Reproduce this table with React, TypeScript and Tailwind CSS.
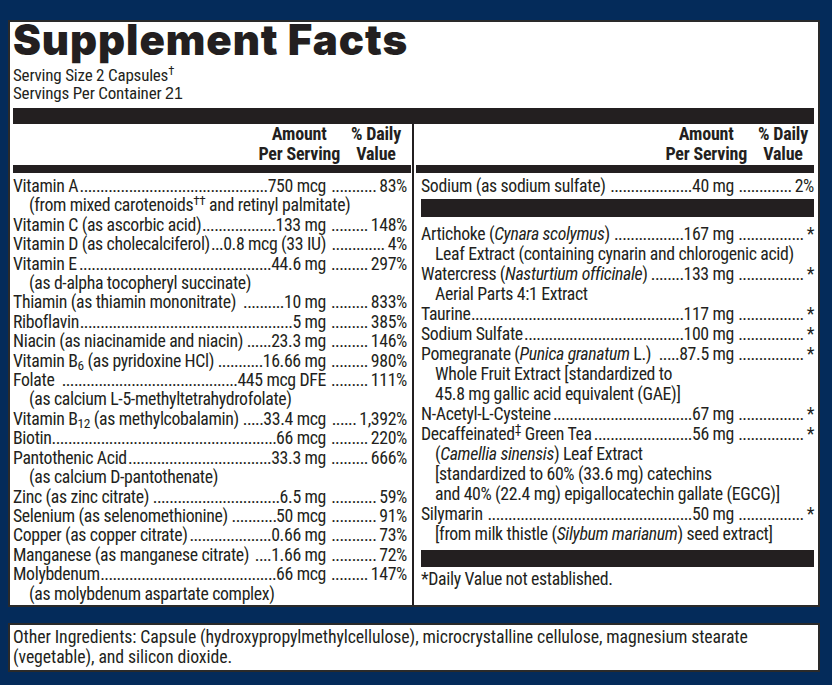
import React, { useLayoutEffect, useRef, useState } from "react"

type Row = {
  name: React.ReactNode
  amount: string
  dv: string
  sub?: React.ReactNode[]
}

const leftRows: Row[] = [
  {
    name: "Vitamin A",
    amount: "750 mcg",
    dv: "83%",
    sub: [
      <>
        (from mixed carotenoids<sup>††</sup> and retinyl palmitate)
      </>,
    ],
  },
  { name: "Vitamin C (as ascorbic acid)", amount: "133 mg", dv: "148%" },
  { name: "Vitamin D (as cholecalciferol)", amount: "0.8 mcg (33 IU)", dv: "4%" },
  { name: "Vitamin E", amount: "44.6 mg", dv: "297%", sub: ["(as d-alpha tocopheryl succinate)"] },
  { name: "Thiamin (as thiamin mononitrate) ", amount: "10 mg", dv: "833%" },
  { name: "Riboflavin", amount: "5 mg", dv: "385%" },
  { name: "Niacin (as niacinamide and niacin)", amount: "23.3 mg", dv: "146%" },
  {
    name: (
      <>
        Vitamin B<sub>6</sub> (as pyridoxine HCl)
      </>
    ),
    amount: "16.66 mg",
    dv: "980%",
  },
  { name: "Folate ", amount: "445 mcg DFE", dv: "111%", sub: ["(as calcium L-5-methyltetrahydrofolate)"] },
  {
    name: (
      <>
        Vitamin B<sub>12</sub> (as methylcobalamin)
      </>
    ),
    amount: "33.4 mcg",
    dv: "1,392%",
  },
  { name: "Biotin", amount: "66 mcg", dv: "220%" },
  { name: "Pantothenic Acid", amount: "33.3 mg", dv: "666%", sub: ["(as calcium D-pantothenate)"] },
  { name: "Zinc (as zinc citrate) ", amount: "6.5 mg", dv: "59%" },
  { name: "Selenium (as selenomethionine) ", amount: "50 mcg", dv: "91%" },
  { name: "Copper (as copper citrate)", amount: "0.66 mg", dv: "73%" },
  { name: "Manganese (as manganese citrate) ", amount: "1.66 mg", dv: "72%" },
  { name: "Molybdenum", amount: "66 mcg", dv: "147%", sub: ["(as molybdenum aspartate complex)"] },
]

const rightRows: Row[] = [
  {
    name: (
      <>
        Artichoke (<i>Cynara scolymus</i>){" "}
      </>
    ),
    amount: "167 mg",
    dv: "*",
    sub: ["Leaf Extract (containing cynarin and chlorogenic acid)"],
  },
  {
    name: (
      <>
        Watercress (<i>Nasturtium officinale</i>)
      </>
    ),
    amount: "133 mg",
    dv: "*",
    sub: ["Aerial Parts 4:1 Extract"],
  },
  { name: "Taurine", amount: "117 mg", dv: "*" },
  { name: "Sodium Sulfate", amount: "100 mg", dv: "*" },
  {
    name: (
      <>
        Pomegranate (<i>Punica granatum</i> L.){" "}
      </>
    ),
    amount: "87.5 mg",
    dv: "*",
    sub: ["Whole Fruit Extract [standardized to", "45.8 mg gallic acid equivalent (GAE)]"],
  },
  { name: "N-Acetyl-L-Cysteine", amount: "67 mg", dv: "*" },
  {
    name: (
      <>
        Decaffeinated<sup>‡</sup> Green Tea
      </>
    ),
    amount: "56 mg",
    dv: "*",
    sub: [
      <>
        (<i>Camellia sinensis</i>) Leaf Extract
      </>,
      "[standardized to 60% (33.6 mg) catechins",
      "and 40% (22.4 mg) epigallocatechin gallate (EGCG)]",
    ],
  },
  {
    name: "Silymarin ",
    amount: "50 mg",
    dv: "*",
    sub: [
      <>
        [from milk thistle (<i>Silybum marianum</i>) seed extract]
      </>,
    ],
  },
]

const PROBE = 100

// dot leader: fills exactly the free width so the dots never run under the amount
function Leader() {
  const ref = useRef<HTMLSpanElement>(null)
  const [count, setCount] = useState(PROBE)

  useLayoutEffect(() => {
    const el = ref.current
    if (!el) return
    const perDot = el.scrollWidth / PROBE
    if (perDot > 0) setCount(Math.max(0, Math.floor(el.clientWidth / perDot)))
  }, [])

  return (
    <span ref={ref} className="min-w-0 flex-1 overflow-hidden whitespace-nowrap text-right tracking-[-0.6px]">
      {".".repeat(count)}
    </span>
  )
}

function NutrientRow({ row, indent }: { row: Row; indent: string }) {
  return (
    <>
      <div className="flex">
        <div className="flex w-[313px] shrink-0">
          <span className="shrink-0 whitespace-pre">{row.name}</span>
          <Leader />
          <span className="shrink-0 whitespace-nowrap">{row.amount}</span>
        </div>
        <div className="flex min-w-0 flex-1 pl-[4px]">
          <Leader />
          <span className="shrink-0 whitespace-nowrap pl-[3px]">{row.dv}</span>
        </div>
      </div>
      {row.sub?.map((s, i) => (
        <div key={i} className={`whitespace-nowrap ${indent}`}>
          {s}
        </div>
      ))}
    </>
  )
}

function ColumnHead() {
  return (
    <div className="flex justify-end gap-[5px] text-[18px] font-bold leading-[20px] tracking-[-0.2px]">
      <div className="text-center">
        Amount
        <br />
        Per Serving
      </div>
      <div className="w-[62px] text-center">
        % Daily
        <br />
        Value
      </div>
    </div>
  )
}

export default function App() {
  return (
    <div className="h-[685px] w-[832px] overflow-hidden bg-[#042b5a] pt-5 font-['Roboto_Condensed',sans-serif] text-[17.8px] tracking-[-0.35px] text-[#231f20]">
      <div className="mx-2 flex h-[587px] w-[812px] flex-col border-2 border-[#2a2a2a] bg-white pl-[3px] pr-[4px]">
        <h1 className="mt-[-2px] font-['Inter',sans-serif] text-[42px] font-black leading-[40px] tracking-[0.9px]">
          Supplement Facts
        </h1>
        <div className="mt-[6px] text-[17px] leading-[18px] tracking-[-0.2px]">
          <div>
            Serving Size 2 Capsules<sup>†</sup>
          </div>
          <div>
            Servings Per Container{" "}
            <span className="font-['Liberation_Sans',sans-serif] text-[16px] tracking-normal">21</span>
          </div>
        </div>
        <div className="mt-[5px] h-4 bg-[#231f20]" />

        <div className="flex flex-1">
          {/* left column */}
          <div className="flex w-[399px] flex-col">
            <div className="pr-[5px]">
              <ColumnHead />
            </div>
            <div className="mr-[1px] mt-[1px] h-2 bg-[#231f20]" />
            <div className="mt-[3px] pr-[5px] leading-[19.4px]">
              {leftRows.map((r, i) => (
                <NutrientRow key={i} row={r} indent="pl-4" />
              ))}
            </div>
          </div>

          <div className="w-[2px] bg-[#231f20]" />

          {/* right column */}
          <div className="flex w-[400px] flex-col">
            <div className="pl-[7px]">
              <ColumnHead />
            </div>
            <div className="ml-[2px] mt-[1px] h-2 bg-[#231f20]" />
            <div className="mt-[3px] pl-[7px] leading-[20px]">
              <NutrientRow row={{ name: "Sodium (as sodium sulfate) ", amount: "40 mg", dv: "2%" }} indent="pl-[14px]" />
            </div>
            <div className="ml-[7px] mt-[3px] h-[18px] bg-[#231f20]" />
            <div className="mt-[7px] pl-[7px] leading-[20px]">
              {rightRows.map((r, i) => (
                <NutrientRow key={i} row={r} indent="pl-[14px]" />
              ))}
            </div>
            <div className="ml-[7px] mt-[6px] h-[17px] bg-[#231f20]" />
            <div className="mt-[2px] pl-[7px] leading-[20px]">*Daily Value not established.</div>
          </div>
        </div>
      </div>

      <div className="mx-2 mt-4 h-[49px] w-[812px] border-2 border-[#2a2a2a] bg-white pl-[3px] pt-[2px] text-[17.8px] leading-[20px] tracking-[-0.1px]">
        Other Ingredients: Capsule (hydroxypropylmethylcellulose), microcrystalline cellulose, magnesium stearate
        <br />
        (vegetable), and silicon dioxide.
      </div>
    </div>
  )
}
